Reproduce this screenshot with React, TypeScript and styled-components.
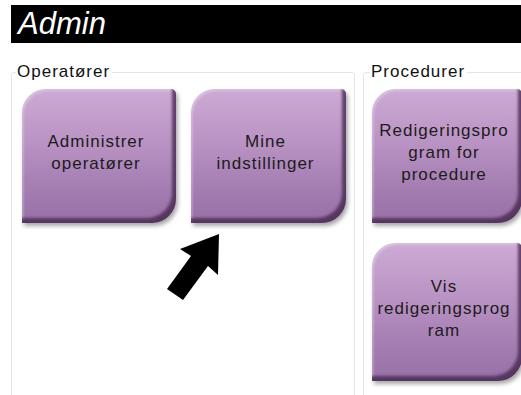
import React from 'react';
import styled, { createGlobalStyle } from 'styled-components';

const GlobalStyle = createGlobalStyle`
  html, body {
    margin: 0;
    padding: 0;
    background: #fff;
    overflow: hidden;
  }
  body {
    width: 521px;
    height: 395px;
    font-family: "Liberation Sans", Arial, sans-serif;
  }
`;

const Page = styled.div`
  width: 521px;
  height: 395px;
  overflow: hidden;
  padding: 5px 0 0 11px;
  box-sizing: border-box;
`;

const Header = styled.div`
  height: 38px;
  background: #000;
  display: flex;
  align-items: center;
  padding-left: 7px;
  margin-bottom: 19px;
`;

const HeaderTitle = styled.h1`
  margin: 0;
  color: #fff;
  font-family: "Liberation Sans", Arial, sans-serif;
  font-style: italic;
  font-weight: normal;
  font-size: 31px;
`;

const Groups = styled.div`
  display: flex;
  gap: 8px;
  align-items: flex-start;
`;

const Group = styled.fieldset<{ $width: number; $inset: number }>`
  position: relative;
  margin: 0;
  width: ${(p) => p.$width}px;
  height: 340px;
  flex-shrink: 0;
  box-sizing: border-box;
  border: 1px solid #e4e4e4;
  border-radius: 3px;
  padding: 7px 0 0 ${(p) => p.$inset}px;
`;

const Legend = styled.legend<{ $offset: number }>`
  padding: 0 2px 0 1px;
  margin-left: ${(p) => p.$offset}px;
  font-size: 17px;
  letter-spacing: 1px;
  color: #111;
`;

const ButtonGrid = styled.div<{ $column?: boolean }>`
  display: flex;
  flex-direction: ${(p) => (p.$column ? 'column' : 'row')};
  gap: ${(p) => (p.$column ? 20 : 15)}px;
`;

const Tile = styled.button<{ $width: number; $height: number }>`
  width: ${(p) => p.$width}px;
  height: ${(p) => p.$height}px;
  border: none;
  border-radius: 24px 5px 24px 0;
  background: linear-gradient(180deg, #cdabd5 0%, #b993c3 40%, #a37cb1 75%, #9770a6 100%);
  box-shadow:
    inset -5px -6px 3px -1px rgba(70, 40, 80, 0.8),
    inset 2px 2px 2px rgba(255, 255, 255, 0.25),
    2px 3px 4px rgba(0, 0, 0, 0.35);
  font-family: "Liberation Sans", Arial, sans-serif;
  font-size: 17px;
  letter-spacing: 1px;
  line-height: 22px;
  color: #1e1a20;
  text-align: center;
  padding: 0 6px 6px 0;
  display: flex;
  align-items: center;
  justify-content: center;
  cursor: pointer;
`;

const Arrow = styled.svg`
  position: absolute;
  left: 150px;
  top: 152px;
`;

export default function App() {
  return (
    <>
      <GlobalStyle />
      <Page>
        <Header>
          <HeaderTitle>Admin</HeaderTitle>
        </Header>
        <Groups>
          <Group $width={344} $inset={10}>
            <Legend $offset={-6}>Operatører</Legend>
            <ButtonGrid>
              <Tile $width={154} $height={134}>
                Administrer
                <br />
                operatører
              </Tile>
              <Tile $width={155} $height={134}>
                Mine
                <br />
                indstillinger
              </Tile>
            </ButtonGrid>
            <Arrow width="60" height="75" viewBox="0 0 60 75">
              <polygon points="57,0 56,41 46,32 21,66 5,55 29,22 18,15" fill="#000" />
            </Arrow>
          </Group>
          <Group $width={200} $inset={8}>
            <Legend $offset={-2}>Procedurer</Legend>
            <ButtonGrid $column>
              <Tile $width={150} $height={134}>
                Redigeringspro
                <br />
                gram for
                <br />
                procedure
              </Tile>
              <Tile $width={150} $height={138}>
                Vis
                <br />
                redigeringsprog
                <br />
                ram
              </Tile>
            </ButtonGrid>
          </Group>
        </Groups>
      </Page>
    </>
  );
}
